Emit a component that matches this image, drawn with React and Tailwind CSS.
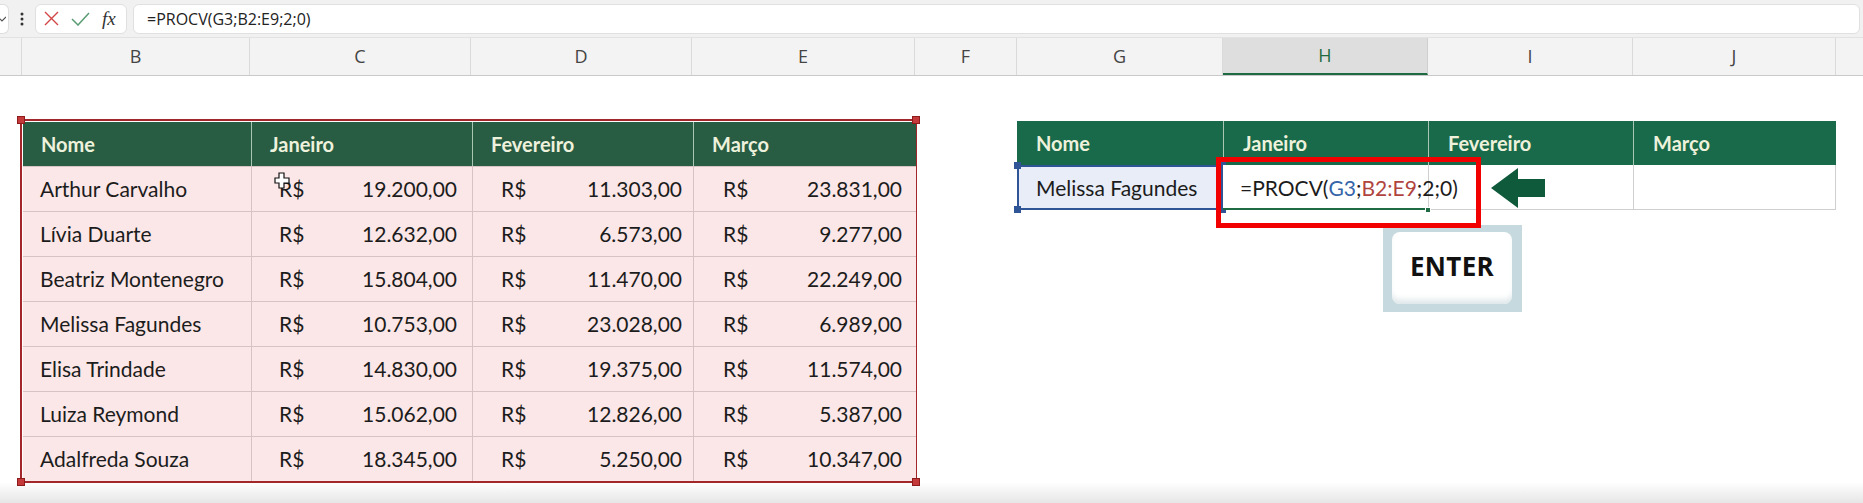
import React from 'react';

const rows = [
  ['Arthur Carvalho', '19.200,00', '11.303,00', '23.831,00'],
  ['Lívia Duarte', '12.632,00', '6.573,00', '9.277,00'],
  ['Beatriz Montenegro', '15.804,00', '11.470,00', '22.249,00'],
  ['Melissa Fagundes', '10.753,00', '23.028,00', '6.989,00'],
  ['Elisa Trindade', '14.830,00', '19.375,00', '11.574,00'],
  ['Luiza Reymond', '15.062,00', '12.826,00', '5.387,00'],
  ['Adalfreda Souza', '18.345,00', '5.250,00', '10.347,00'],
];

const valuePad = ['pl-[27px] pr-[15px]', 'pl-[28px] pr-[11px]', 'pl-[29px] pr-[14px]'];

const cols = [
  { l: 'B', w: 'w-[228px]' },
  { l: 'C', w: 'w-[221px]' },
  { l: 'D', w: 'w-[221px]' },
  { l: 'E', w: 'w-[223px]' },
  { l: 'F', w: 'w-[102px]' },
  { l: 'G', w: 'w-[206px]' },
  { l: 'H', w: 'w-[205px]', active: true },
  { l: 'I', w: 'w-[205px]' },
  { l: 'J', w: 'w-[203px]' },
];

function FormulaBar() {
  return (
    <div className="h-[38px] bg-[#f1f1f1] flex items-center border-b border-[#e2e2e2]">
      {/* name box edge */}
      <div className="w-[9px] h-[30px] bg-white rounded-r-md border border-l-0 border-[#dedede] flex items-center overflow-hidden">
        <svg width="8" height="8" viewBox="0 0 8 8" className="-ml-[2px]">
          <path d="M0 2 L4 6 L8 2" stroke="#555" strokeWidth="1.2" fill="none" />
        </svg>
      </div>
      <div className="w-[26px] flex justify-center">
        <svg width="4" height="14" viewBox="0 0 4 14">
          <circle cx="2" cy="2" r="1.5" fill="#333" />
          <circle cx="2" cy="7" r="1.5" fill="#333" />
          <circle cx="2" cy="12" r="1.5" fill="#333" />
        </svg>
      </div>
      <div className="w-[92px] h-[30px] bg-white rounded-md border border-[#e0e0e0] flex items-center pl-[8px] gap-[12px]">
        <svg width="15" height="15" viewBox="0 0 15 15">
          <path d="M1 1 L14 14 M14 1 L1 14" stroke="#d24545" strokeWidth="1.4" />
        </svg>
        <svg width="19" height="14" viewBox="0 0 19 14">
          <path d="M1 7 L7 13 L18 1" stroke="#5a9c74" strokeWidth="1.5" fill="none" />
        </svg>
        <span className="[font-family:'Liberation_Serif',serif] italic text-[19px] text-[#333] leading-none">fx</span>
      </div>
      <div className="ml-[6px] flex-1 mr-[3px] h-[30px] bg-white rounded-md border border-[#e0e0e0] flex items-center pl-[13px]">
        <span className="[font-family:'Open_Sans',sans-serif] text-[16px] text-[#222]">=PROCV(G3;B2:E9;2;0)</span>
      </div>
    </div>
  );
}

function ColumnHeaders() {
  return (
    <div className="h-[38px] flex bg-[#f3f3f3] border-b border-[#c9c9c9] [font-family:'Open_Sans',sans-serif]">
      <div className="w-[22px] border-r border-[#dadada]" />
      {cols.map((c) => (
        <div
          key={c.l}
          className={
            c.active
              ? `${c.w} flex items-center justify-center bg-[#dedede] text-[#1e6b41] text-[18px] border-b-2 border-[#1e6b41] border-r border-r-[#d0d0d0]`
              : `${c.w} flex items-center justify-center text-[#444] text-[18px] border-r border-[#dadada]`
          }
        >
          {c.l}
        </div>
      ))}
      <div className="flex-1" />
    </div>
  );
}

function LeftTable() {
  return (
    <div className="relative w-[897px] border-2 border-[#a3272a] bg-white">
      <div className="grid grid-cols-[228px_221px_221px_223px] text-[21px] text-[#1c1c1c] border-t border-l border-white">
        {['Nome', 'Janeiro', 'Fevereiro', 'Março'].map((h, i) => (
          <div
            key={h}
            className={`h-[44px] bg-[#285d44] flex items-center pl-[18px] font-bold text-[20px] text-[#eef2dc] ${i > 0 ? 'border-l border-[#a9c6b2]' : ''}`}
          >
            {h}
          </div>
        ))}
        {rows.map((r) => (
          <React.Fragment key={r[0]}>
            <div className="h-[45px] bg-[#fbe7e7] border-t border-[#d7c3c3] flex items-center pl-[17px]">{r[0]}</div>
            {r.slice(1).map((v, i) => (
              <div
                key={i}
                className={`h-[45px] bg-[#fbe7e7] border-t border-l border-[#d7c3c3] flex items-center justify-between ${valuePad[i]}`}
              >
                <span>R$</span>
                <span>{v}</span>
              </div>
            ))}
          </React.Fragment>
        ))}
      </div>
      {/* selection handles */}
      <div className="absolute -left-[5px] -top-[5px] w-[8px] h-[8px] bg-[#c43a3a] border border-[#8e1c1c]" />
      <div className="absolute -right-[5px] -top-[5px] w-[8px] h-[8px] bg-[#c43a3a] border border-[#8e1c1c]" />
      <div className="absolute -left-[5px] -bottom-[5px] w-[8px] h-[8px] bg-[#c43a3a] border border-[#8e1c1c]" />
      <div className="absolute -right-[5px] -bottom-[5px] w-[8px] h-[8px] bg-[#c43a3a] border border-[#8e1c1c]" />
      {/* mouse cursor */}
      <svg className="absolute left-[252px] top-[51px]" width="16" height="17" viewBox="0 0 16 17">
        <path d="M5 1 H10 V6 H15 V11 H10 V16 H5 V11 H1 V6 H5 Z" fill="#fff" stroke="#111" strokeWidth="1.2" />
      </svg>
    </div>
  );
}

function RightTable() {
  return (
    <div className="relative mt-[2px] w-[819px] text-[21px] text-[#1c1c1c]">
      <div className="grid grid-cols-[206px_205px_205px_203px]">
        {['Nome', 'Janeiro', 'Fevereiro', 'Março'].map((h, i) => (
          <div
            key={h}
            className={`h-[44px] bg-[#196a4a] flex items-center pl-[19px] font-bold text-[20px] text-[#eef2dc] ${i > 0 ? 'border-l border-[#a9c6b2]' : ''}`}
          >
            {h}
          </div>
        ))}
        <div className="relative h-[45px] bg-[#e8edf7] flex items-center pl-[19px]">
          Melissa Fagundes
          <div className="absolute inset-0 border-2 border-[#2f5597]" />
          <div className="absolute -left-[3px] -top-[3px] w-[7px] h-[7px] bg-[#2f5597]" />
          <div className="absolute -right-[3px] -top-[3px] w-[7px] h-[7px] bg-[#2f5597]" />
          <div className="absolute -left-[3px] -bottom-[3px] w-[7px] h-[7px] bg-[#2f5597]" />
          <div className="absolute -right-[3px] -bottom-[3px] w-[7px] h-[7px] bg-[#2f5597]" />
        </div>
        <div className="relative z-10 h-[45px] bg-white flex items-center pl-[17px] whitespace-nowrap">
          <span>=PROCV(</span>
          <span className="text-[#3564a8]">G3</span>
          <span>;</span>
          <span className="text-[#b0443f]">B2:E9</span>
          <span>;2;0)</span>
          <span className="ml-[2px] w-[1px] h-[24px] bg-[#111]" />
          <div className="absolute left-0 right-0 bottom-0 h-[2px] bg-[#1e6b44]" />
          <div className="absolute -right-[3px] -bottom-[3px] w-[6px] h-[6px] bg-[#1e6b44] border border-white" />
        </div>
        <div className="h-[45px] bg-white border-l border-b border-[#cfcfcf]" />
        <div className="h-[45px] bg-white border-l border-r border-b border-[#cfcfcf]" />
      </div>

      {/* red highlight box */}
      <div className="absolute z-20 left-[199px] top-[36px] w-[265px] h-[71px] border-[5px] border-[#f20000]" />

      {/* arrow */}
      <svg className="absolute z-20 left-[474px] top-[47px]" width="54" height="40" viewBox="0 0 54 40">
        <path d="M0 20 L27 0 V11 H54 V29 H27 V40 Z" fill="#0f5a3b" />
      </svg>

      {/* ENTER key */}
      <div className="absolute left-[366px] top-[104px] w-[139px] h-[87px] bg-[#c6d9df] pt-[7px] pb-[8px] pl-[9px] pr-[10px]">
        <div className="w-full h-full bg-white rounded-[8px] shadow-[inset_0_-7px_6px_-3px_#dde6e9] flex items-center justify-center pb-[4px]">
          <span className="[font-family:'Open_Sans',sans-serif] font-bold text-[26px] text-[#111] tracking-[0.3px]">ENTER</span>
        </div>
      </div>
    </div>
  );
}

export default function App() {
  return (
    <div className="w-[1863px] h-[503px] overflow-hidden bg-white flex flex-col [font-family:Lato,sans-serif]">
      <FormulaBar />
      <ColumnHeaders />
      <div className="flex items-start pt-[43px] h-[406px]">
        <div className="w-[20px]" />
        <LeftTable />
        <div className="w-[100px]" />
        <RightTable />
      </div>
      <div className="flex-1 bg-gradient-to-b from-white to-[#e6e6e6]" />
    </div>
  );
}
